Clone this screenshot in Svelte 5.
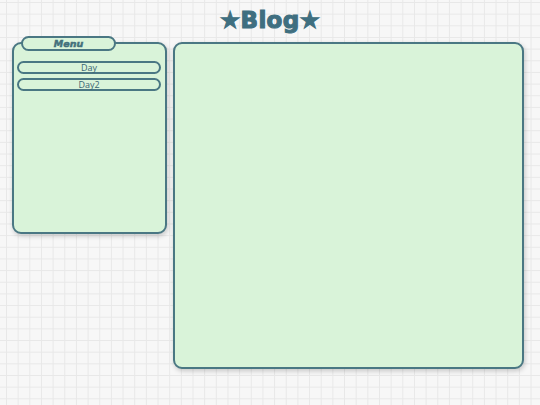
<script>
	const days = ['Day', 'Day2'];
</script>

<div class="page">
	<h1 class="title">★Blog★</h1>
	<div class="columns">
		<aside class="menu">
			<div class="menu-title">Menu</div>
			<ul>
				{#each days as day}
					<li>{day}</li>
				{/each}
			</ul>
		</aside>
		<main class="content"></main>
	</div>
</div>

<style>
	:global(body) {
		margin: 0;
		background-color: #f7f7f7;
		background-image:
			linear-gradient(#e8e8e8 1px, transparent 1px),
			linear-gradient(90deg, #e8e8e8 1px, transparent 1px);
		background-size: 11.67px 11.67px;
		background-position: 6px 2px;
	}

	.page {
		width: 540px;
		height: 405px;
		overflow: hidden;
		box-sizing: border-box;
		padding: 0 16px 0 12px;
	}

	.title {
		margin: 0;
		height: 42px;
		padding-left: 4px;
		line-height: 41px;
		text-align: center;
		font-family: "DejaVu Sans", sans-serif;
		font-weight: 700;
		font-size: 23px;
		letter-spacing: 0.3px;
		color: #3f6f80;
		-webkit-text-stroke: 1.1px #3f6f80;
	}

	.columns {
		display: flex;
		align-items: flex-start;
		gap: 6px;
	}

	.menu,
	.content {
		box-sizing: border-box;
		background: #d9f3d9;
		border: 2px solid #4a7783;
		border-radius: 9px;
		box-shadow: 1px 2px 5px rgba(0, 0, 0, 0.2);
	}

	.menu {
		position: relative;
		width: 155px;
		height: 192px;
		padding: 17px 4px 0 3px;
	}

	.content {
		width: 351px;
		height: 327px;
	}

	.menu-title {
		position: absolute;
		top: -8px;
		left: 7px;
		box-sizing: border-box;
		width: 95px;
		height: 15px;
		background: #d9f3d9;
		border: 2px solid #4a7783;
		border-radius: 8px;
		text-align: center;
		font-family: "DejaVu Sans", sans-serif;
		font-weight: 700;
		font-style: italic;
		font-size: 9.5px;
		line-height: 11px;
		color: #43707c;
		-webkit-text-stroke: 0.5px #43707c;
	}

	ul {
		margin: 0;
		padding: 0;
		list-style: none;
		display: flex;
		flex-direction: column;
		gap: 4px;
	}

	li {
		box-sizing: border-box;
		height: 13px;
		border: 2px solid #4a7783;
		border-radius: 7px;
		text-align: center;
		font-family: "Open Sans", sans-serif;
		font-size: 9px;
		line-height: 9px;
		color: #3a6573;
	}
</style>
